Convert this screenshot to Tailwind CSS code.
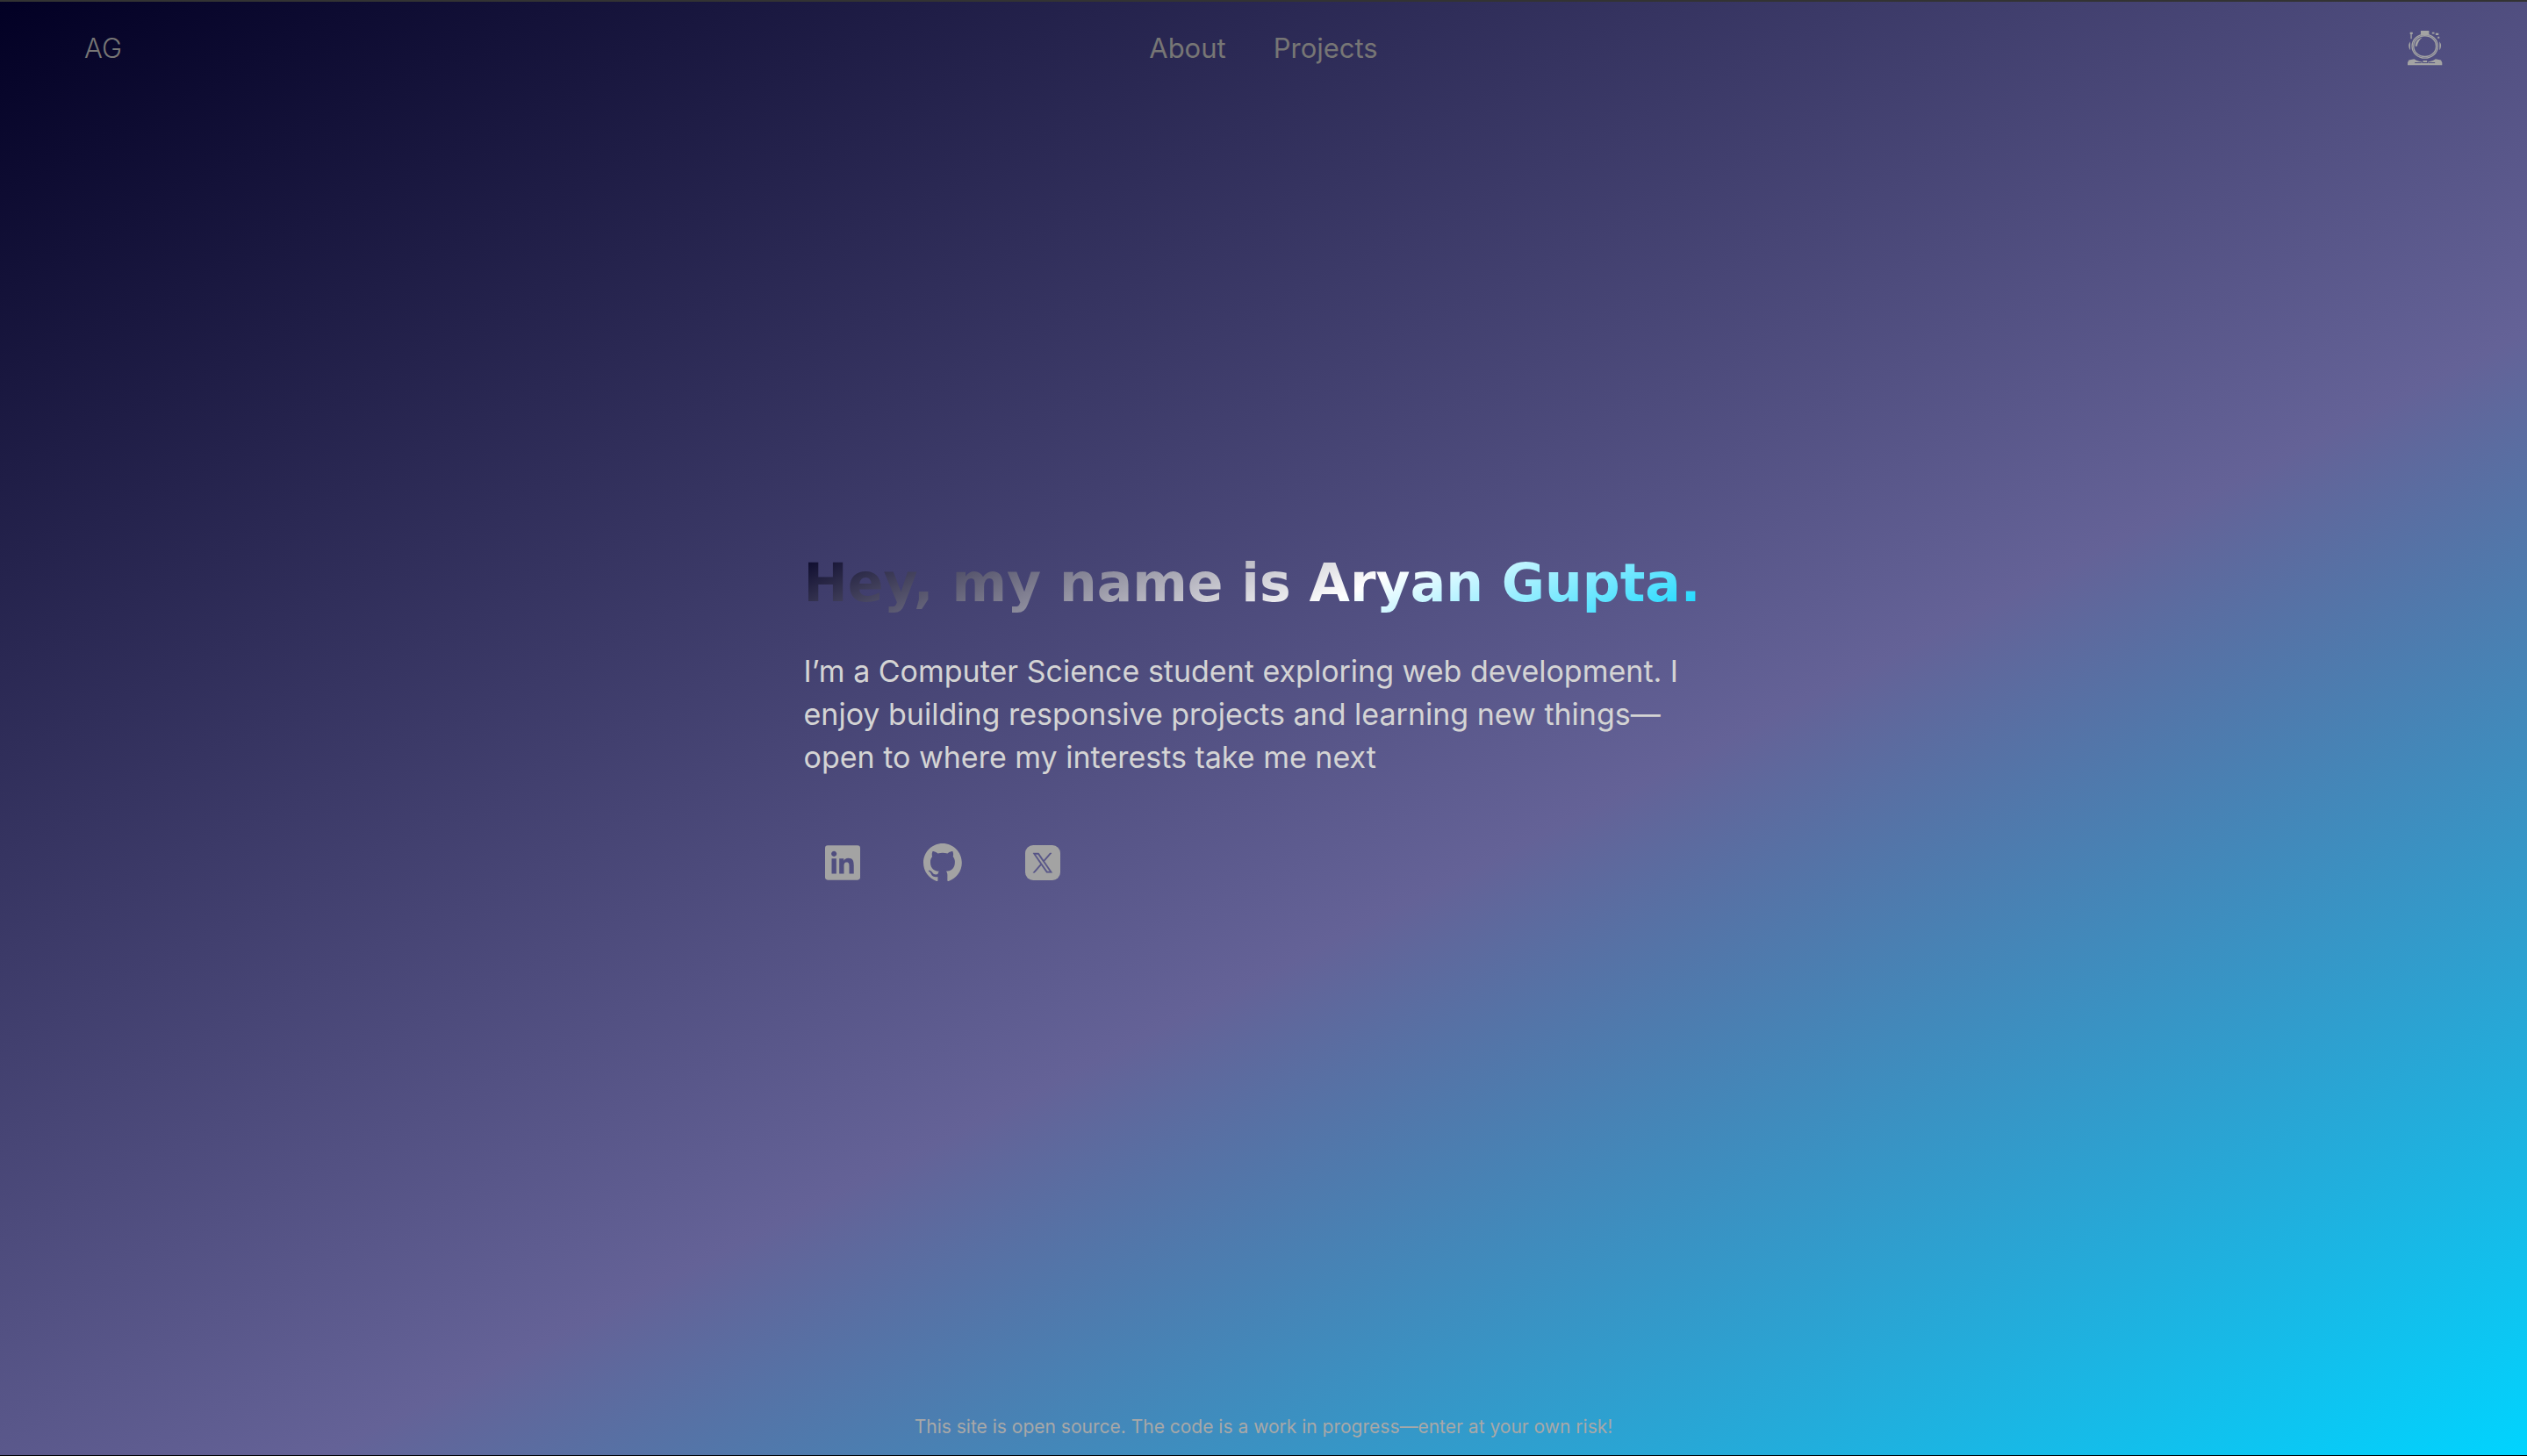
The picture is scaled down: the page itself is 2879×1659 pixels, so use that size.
<!DOCTYPE html>
<html lang="en">
<head>
<meta charset="utf-8">
<title>Aryan Gupta</title>
<script src="https://cdn.jsdelivr.net/npm/@tailwindcss/browser@4"></script>
</head>
<body class="flex min-h-screen flex-col border-t-2 border-b border-t-[#333333] border-b-black bg-[linear-gradient(153deg,#020024_0%,#646297_59%,#00d4ff_100%)] bg-origin-border font-['Inter',sans-serif]">
  <header class="grid h-[106px] grid-cols-3 items-center px-24 text-[31px] leading-10 text-[#777675]">
    <a href="#" class="justify-self-start font-light">AG</a>
    <nav class="flex gap-[54px] justify-self-center">
      <a href="#about">About</a>
      <a href="#projects">Projects</a>
    </nav>
    <button type="button" aria-label="Toggle theme" class="justify-self-end text-[#a3a3a3]">
      <svg class="size-10" viewBox="0 0 118 118" fill="none" stroke="currentColor">
        <ellipse cx="58" cy="52" rx="43" ry="40" stroke-width="4"/>
        <ellipse cx="58" cy="52" rx="38" ry="35" stroke-width="4"/>
        <path d="M44 0h28v17q-14-4-28 0z" fill="currentColor" stroke="none"/>
        <path d="M9 36Q-2 50 9 66zM107 36Q118 50 107 66z" fill="currentColor" stroke="none"/>
        <path d="M12 7v20" stroke-width="4"/>
        <path d="M8 5h9v7H8zM82 5h8v5h-8zM94 8h10v7H94zM101 20h6v6h-6z" fill="currentColor" stroke="none"/>
        <path d="M25 52Q25 29 50 22Q35 34 32 52z" fill="currentColor" stroke="none"/>
        <path d="M0 116v-9l4-8 18-4q14 10 36 10t36-10l18 4 4 8v9z" fill="currentColor" stroke="none"/>
        <path d="M24 108h22M70 108h22" stroke="#514f80" stroke-width="3"/>
        <path d="M50 99h17v9H50z" fill="currentColor" stroke="#514f80" stroke-width="3"/>
      </svg>
    </button>
  </header>

  <main class="flex flex-1 flex-col items-center justify-center pb-22">
    <section class="w-full max-w-[1048px]">
      <h1 class="bg-[linear-gradient(155deg,#020024_0%,#ffffff_60%,#00d4ff_100%)] bg-clip-text font-['DejaVu_Sans',sans-serif] text-[60px] leading-20 font-bold whitespace-nowrap text-transparent">Hey, my name is Aryan Gupta.</h1>
      <p class="mt-9 text-[34px] leading-[49px] text-[#d4d4d4]">I’m a Computer Science student exploring web development. I enjoy building responsive projects and learning new things—open to where my interests take me next</p>
      <div class="mt-[72px] flex gap-[66px] px-5 text-[#a3a3a3]">
        <a href="#linkedin" aria-label="LinkedIn" class="flex size-12 items-center justify-center">
          <svg class="size-10" viewBox="0 0 448 448" fill="currentColor">
            <mask id="in">
              <rect width="448" height="448" fill="#fff"/>
              <path transform="translate(22 18) scale(.9)" fill="#000" d="M135.4 384H69V170.2h66.5V384zm-33.2-243c-21.3 0-38.5-17.3-38.5-38.5S80.9 64 102.2 64c21.2 0 38.5 17.3 38.5 38.5 0 21.3-17.2 38.5-38.5 38.5zm282.1 243h-66.4V280c0-24.8-.5-56.7-34.5-56.7-34.6 0-39.9 27-39.9 54.9V384h-66.4V170.2h63.7v29.2h.9c8.9-16.8 30.6-34.5 62.2-34.5 66.500 0 78.9 43.8 78.9 100.9V384z"/>
            </mask>
            <rect width="448" height="440" y="4" rx="34" mask="url(#in)"/>
          </svg>
        </a>
        <a href="#github" aria-label="GitHub" class="flex size-12 items-center justify-center">
          <svg class="size-11" viewBox="0 0 98 98" fill="currentColor"><path d="M48.854 0C21.839 0 0 22 0 49.217c0 21.756 13.993 40.172 33.405 46.69 2.427.49 3.316-1.059 3.316-2.362 0-1.141-.08-5.052-.08-9.127-13.59 2.934-16.42-5.867-16.42-5.867-2.184-5.704-5.42-7.17-5.42-7.17-4.448-3.015.324-3.015.324-3.015 4.934.326 7.523 5.052 7.523 5.052 4.367 7.496 11.404 5.378 14.235 4.074.404-3.178 1.699-5.378 3.074-6.6-10.839-1.141-22.243-5.378-22.243-24.283 0-5.378 1.94-9.778 5.014-13.2-.485-1.222-2.184-6.275.486-13.038 0 0 4.125-1.304 13.426 5.052a46.97 46.97 0 0 1 12.214-1.63c4.125 0 8.33.571 12.213 1.63 9.302-6.356 13.427-5.052 13.427-5.052 2.67 6.763.97 11.816.485 13.038 3.155 3.422 5.015 7.822 5.015 13.2 0 18.905-11.404 23.06-22.324 24.283 1.78 1.548 3.316 4.481 3.316 9.126 0 6.6-.08 11.897-.08 13.526 0 1.304.89 2.853 3.316 2.364 19.412-6.52 33.405-24.935 33.405-46.691C97.707 22 75.788 0 48.854 0z"/></svg>
        </a>
        <a href="#x" aria-label="X" class="flex size-12 items-center justify-center">
          <svg class="size-10" viewBox="0 0 40 40" fill="currentColor">
            <mask id="x">
              <rect width="40" height="40" fill="#fff"/>
              <path transform="translate(8.7 9) scale(.93)" fill="#000" stroke="#000" stroke-width=".5" d="M14.234 10.162 22.977 0h-2.072l-7.591 8.824L7.251 0H.258l9.168 13.343L.258 24H2.33l8.016-9.318L16.749 24h6.993zm-2.837 3.299-.929-1.329L3.076 1.56h3.182l5.965 8.532.929 1.329 7.754 11.09h-3.182z"/>
            </mask>
            <rect width="40" height="40" rx="9" mask="url(#x)"/>
          </svg>
        </a>
      </div>
    </section>
  </main>

  <footer class="pb-4 text-center text-[21px] leading-8 text-[#a8a8a8]">This site is open source. The code is a work in progress—enter at your own risk!</footer>
</body>
</html>
